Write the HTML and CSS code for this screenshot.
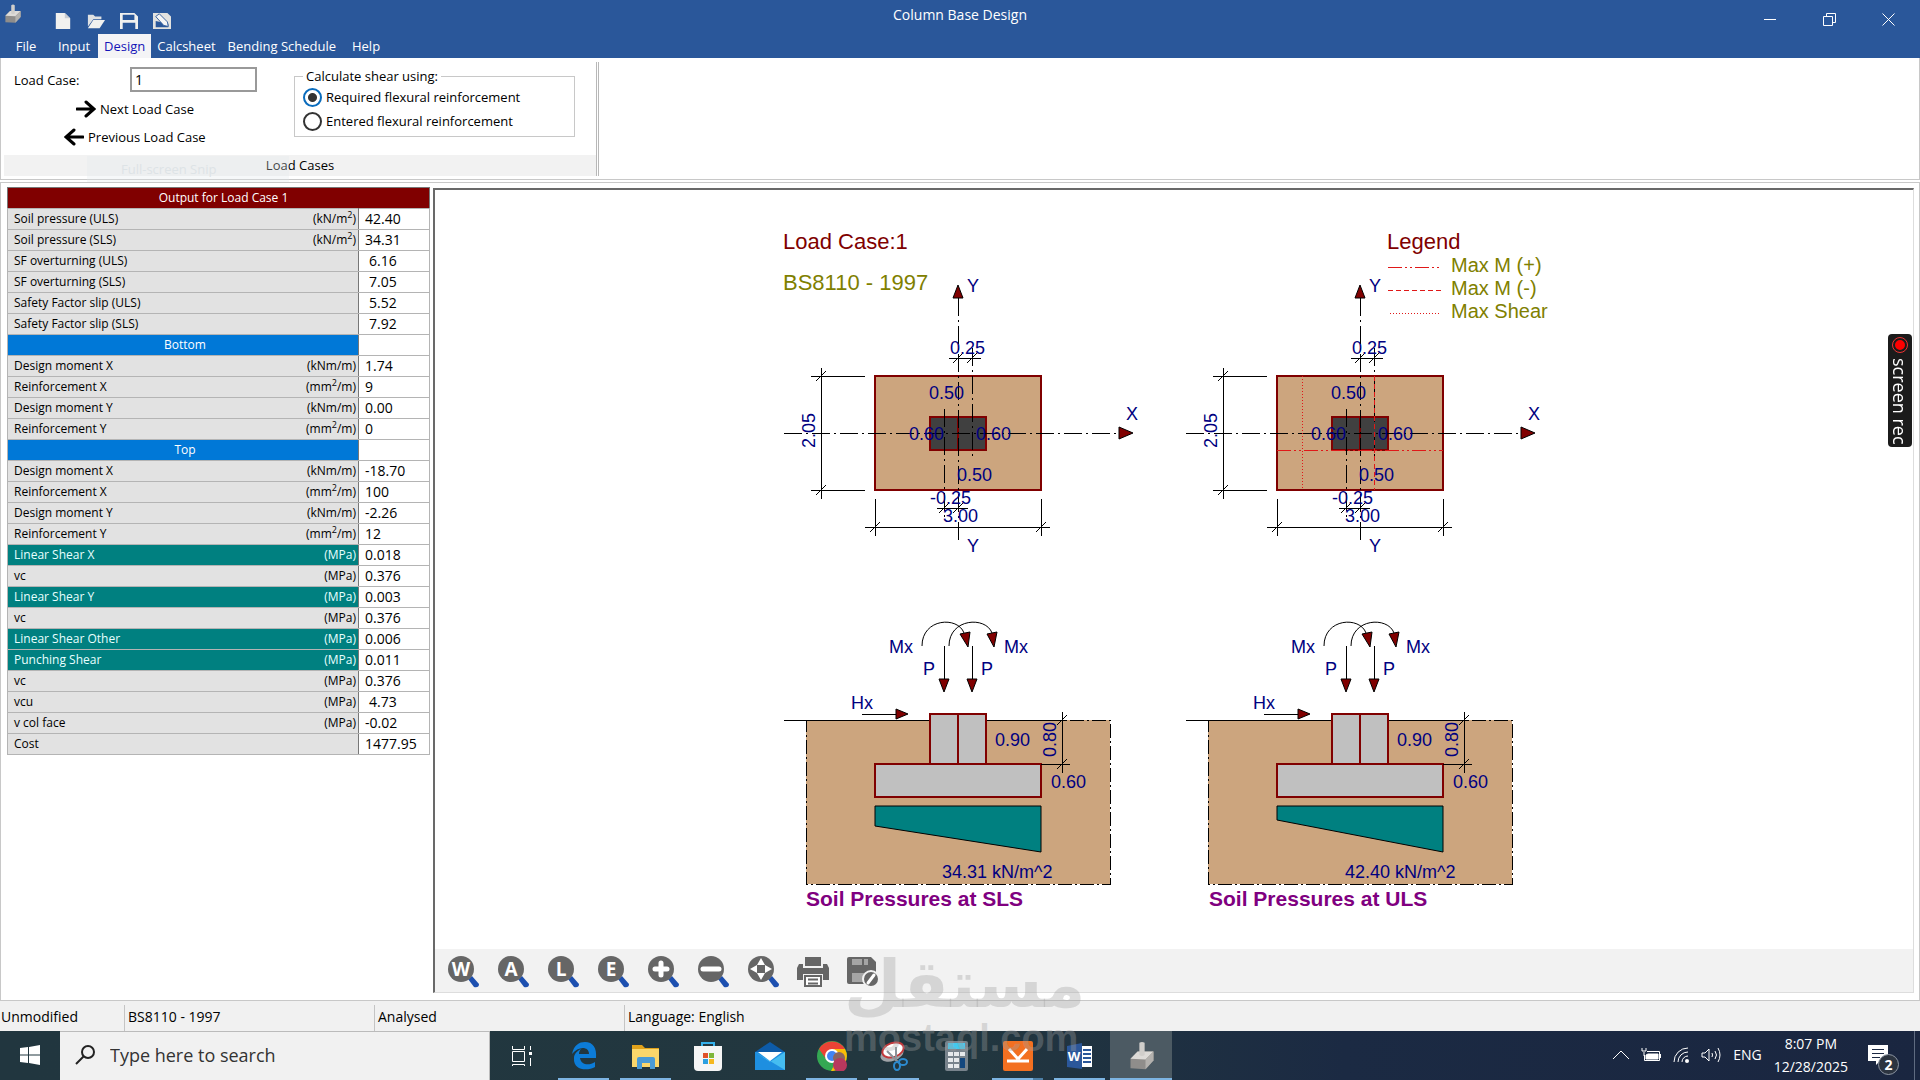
FILE: index.html
```html
<!DOCTYPE html>
<html lang="en">
<head>
    <meta charset="UTF-8">
    <meta name="viewport" content="width=device-width, initial-scale=1.0">
    <title>Column Base Design</title>
    <link rel="stylesheet" href="styles.css">
</head>
<body>
<svg class="sprite" aria-hidden="true">
    <defs>
        <symbol id="app-icon" viewBox="0 0 28 34">
            <path d="M1 20 L9 12 L27 12 L27 22 L18 32 L1 31 Z" fill="#8f8d8b"/>
            <path d="M1 20 L9 12 L27 12 L18 21 Z" fill="#dddbd8"/>
            <path d="M18 21 L27 12 L27 22 L18 32 Z" fill="#b3b1ae"/>
            <path d="M11 2 Q14 0 17 2 L17 16 Q14 18 11 16 Z" fill="#d0cecb"/>
        </symbol>
        <symbol id="lens" viewBox="0 0 32 32">
            <path d="M21 23 L25 20 L32 28 Q32 32 27 31 Z" fill="#1c4fb0"/>
            <circle cx="14" cy="13" r="13" fill="#666"/>
        </symbol>

        <!-- Plan view, origin at the centre of the base -->
        <g id="plan">
            <rect class="base" x="-83" y="-57" width="166" height="114"/>
            <rect class="column" x="-28" y="-16" width="56" height="33"/>
            <path class="edge" d="M0 -16 V17"/>
            <path class="axis" d="M-174 0 H161 M0 -135 V110 M14 -85 V25 M-14 -24 V84"/>
            <path class="arrow" d="M161 -6 L175 0 L161 6 Z M-5 -135 L0 -148 L5 -135 Z"/>
            <path class="dim" d="M-137 -65 V66 M-147 -57 H-93 M-147 57 H-93 M-93 94 H92 M-83 66 V103 M83 66 V103 M-9 -75 H23 M-21 75 H10"/>
            <path class="tick" d="M-142 -52 l10 -10 M-142 62 l10 -10 M-88 99 l10 -10 M78 99 l10 -10 M-5 -70 l10 -10 M9 -70 l10 -10 M-19 80 l10 -10 M-5 80 l10 -10"/>
            <text x="9" y="-141">Y</text>
            <text x="168" y="-13">X</text>
            <text x="9" y="119">Y</text>
            <text x="-8" y="-79">0.25</text>
            <text x="-29" y="-34">0.50</text>
            <text x="-49" y="7">0.60</text>
            <text x="18" y="7">0.60</text>
            <text x="-1" y="48">0.50</text>
            <text x="-28" y="71">-0.25</text>
            <text x="-15" y="89">3.00</text>
            <text transform="translate(-143 15) rotate(-90)">2.05</text>
        </g>

        <!-- Section, origin at ground level on the centre line -->
        <g id="section">
            <rect class="soil" x="-152" y="0" width="304" height="164"/>
            <path class="dim" d="M-174 0 H108"/>
            <rect class="concrete" x="-28" y="-6" width="56" height="50"/>
            <rect class="concrete" x="-83" y="44" width="166" height="33"/>
            <path class="edge" d="M0 -6 V44"/>
            <path class="dim" d="M104 -8 V53 M83 44 H112 M-96 -6 H-62 M-14 -74 V-41 M14 -74 V-41"/>
            <path class="tick" d="M99 5 l10 -10 M99 49 l10 -10"/>
            <path class="tick" d="M-36 -74 C-36 -102 0 -104 6 -87 M-9 -74 C-9 -102 28 -104 34 -87"/>
            <path class="arrow" d="M-62 -11 L-50 -6 L-62 -1 Z M-19 -41 H-9 L-14 -28 Z M9 -41 H19 L14 -28 Z M2 -86 L12 -88 L10 -73 Z M29 -86 L39 -88 L36 -73 Z"/>
            <text x="-107" y="-11">Hx</text>
            <text x="-69" y="-67">Mx</text>
            <text x="46" y="-67">Mx</text>
            <text x="-35" y="-45">P</text>
            <text x="23" y="-45">P</text>
            <text x="37" y="26">0.90</text>
            <text x="93" y="68">0.60</text>
            <text transform="translate(98 37) rotate(-90)">0.80</text>
        </g>
    </defs>
</svg>

<header class="titlebar">
    <div class="caption">
        <div class="quick-access">
            <svg class="logo"><use href="#app-icon"/></svg>
            <button aria-label="New"><svg viewBox="0 0 20 20"><path d="M2 1 H12 L18 7 V19 H2 Z" fill="#f1f1ef"/><path d="M12 1 V7 H18" fill="#c9cdd3"/></svg></button>
            <button aria-label="Open"><svg viewBox="0 0 20 20"><path d="M1 3 H7 L9 5 H16 V8 H7 L1 16 Z" fill="#dfe1e3"/><path d="M7 9 H20 L14 18 H1 Z" fill="#f1f1ef"/></svg></button>
            <button aria-label="Save"><svg viewBox="0 0 20 20"><path d="M0 1 H16 L20 5 V19 H0 Z M3 3 V9 H16 V3 Z M3 12 V19 H17 V12 Z" fill="#f1f1ef" fill-rule="evenodd"/></svg></button>
            <button aria-label="Save as"><svg viewBox="0 0 20 20"><path d="M0 1 H16 L20 5 V19 H0 Z M3 10 V17 H17 V13 Z" fill="#e2e2e0" fill-rule="evenodd"/><path d="M3 5 L7 2 L16 11 L17 16 L12 15 Z" fill="#f5f5f5" stroke="#2a579a"/></svg></button>
        </div>
        <h1>Column Base Design</h1>
        <div class="window-buttons">
            <button aria-label="Minimise"><svg viewBox="0 0 13 13"><path d="M0 6.5 H12"/></svg></button>
            <button aria-label="Restore"><svg viewBox="0 0 13 13"><path d="M.5 3.5 H9.5 V12.5 H.5 Z M3.5 3.5 V.5 H12.5 V9.5 H9.5"/></svg></button>
            <button aria-label="Close"><svg viewBox="0 0 13 13"><path d="M.5 .5 L12.5 12.5 M12.5 .5 L.5 12.5"/></svg></button>
        </div>
    </div>
    <nav class="tabs">
        <button>File</button>
        <button>Input</button>
        <button class="active">Design</button>
        <button>Calcsheet</button>
        <button>Bending Schedule</button>
        <button>Help</button>
    </nav>
</header>

<section class="ribbon">
    <div class="ribbon-group">
        <div class="ribbon-body">
            <div class="load-case">
                <div class="field">
                    <label for="load-case">Load Case:</label>
                    <input type="text" id="load-case" value="1">
                </div>
                <button class="next"><svg viewBox="0 0 20 18"><path d="M1 9 H17 M10 2 L18 9 L10 16"/></svg>Next Load Case</button>
                <button class="previous"><svg viewBox="0 0 20 18"><path d="M19 9 H3 M10 2 L2 9 L10 16"/></svg>Previous Load Case</button>
            </div>
            <fieldset>
                <legend>Calculate shear using:</legend>
                <label><input type="radio" name="shear" checked>Required flexural reinforcement</label>
                <label><input type="radio" name="shear">Entered flexural reinforcement</label>
            </fieldset>
        </div>
        <div class="ribbon-caption">Load Cases</div>
        <div class="snip-hint">Full-screen Snip</div>
    </div>
</section>

<main>
    <section class="output">
        <table>
            <colgroup>
                <col>
                <col class="values">
            </colgroup>
            <thead>
                <tr><th colspan="2">Output for Load Case 1</th></tr>
            </thead>
            <tbody>
                <tr><td><div>Soil pressure (ULS)<span>(kN/m<sup>2</sup>)</span></div></td><td>42.40</td></tr>
                <tr><td><div>Soil pressure (SLS)<span>(kN/m<sup>2</sup>)</span></div></td><td>34.31</td></tr>
                <tr><td><div>SF overturning (ULS)</div></td><td class="pad">6.16</td></tr>
                <tr><td><div>SF overturning (SLS)</div></td><td class="pad">7.05</td></tr>
                <tr><td><div>Safety Factor slip (ULS)</div></td><td class="pad">5.52</td></tr>
                <tr><td><div>Safety Factor slip (SLS)</div></td><td class="pad">7.92</td></tr>
                <tr class="heading"><td>Bottom</td><td></td></tr>
                <tr><td><div>Design moment X<span>(kNm/m)</span></div></td><td>1.74</td></tr>
                <tr><td><div>Reinforcement X<span>(mm<sup>2</sup>/m)</span></div></td><td>9</td></tr>
                <tr><td><div>Design moment Y<span>(kNm/m)</span></div></td><td>0.00</td></tr>
                <tr><td><div>Reinforcement Y<span>(mm<sup>2</sup>/m)</span></div></td><td>0</td></tr>
                <tr class="heading"><td>Top</td><td></td></tr>
                <tr><td><div>Design moment X<span>(kNm/m)</span></div></td><td>-18.70</td></tr>
                <tr><td><div>Reinforcement X<span>(mm<sup>2</sup>/m)</span></div></td><td>100</td></tr>
                <tr><td><div>Design moment Y<span>(kNm/m)</span></div></td><td>-2.26</td></tr>
                <tr><td><div>Reinforcement Y<span>(mm<sup>2</sup>/m)</span></div></td><td>12</td></tr>
                <tr class="shear"><td><div>Linear Shear X<span>(MPa)</span></div></td><td>0.018</td></tr>
                <tr><td><div>vc<span>(MPa)</span></div></td><td>0.376</td></tr>
                <tr class="shear"><td><div>Linear Shear Y<span>(MPa)</span></div></td><td>0.003</td></tr>
                <tr><td><div>vc<span>(MPa)</span></div></td><td>0.376</td></tr>
                <tr class="shear"><td><div>Linear Shear Other<span>(MPa)</span></div></td><td>0.006</td></tr>
                <tr class="shear"><td><div>Punching Shear<span>(MPa)</span></div></td><td>0.011</td></tr>
                <tr><td><div>vc<span>(MPa)</span></div></td><td>0.376</td></tr>
                <tr><td><div>vcu<span>(MPa)</span></div></td><td class="pad">4.73</td></tr>
                <tr><td><div>v col face<span>(MPa)</span></div></td><td>-0.02</td></tr>
                <tr><td><div>Cost</div></td><td>1477.95</td></tr>
            </tbody>
        </table>
    </section>

    <section class="viewer">
        <svg class="drawing" viewBox="1 0 1478 759">
            <text class="title" x="349" y="59">Load Case:1</text>
            <text class="code" x="349" y="100">BS8110 - 1997</text>

            <text class="title" x="953" y="59">Legend</text>
            <path class="moment-pos" d="M954 77 H1008"/>
            <path class="moment-neg" d="M954 100 H1008"/>
            <path class="max-shear" d="M956 123 H1006"/>
            <text class="legend" x="1017" y="82">Max M (+)</text>
            <text class="legend" x="1017" y="105">Max M (-)</text>
            <text class="legend" x="1017" y="128">Max Shear</text>

            <use href="#plan" x="524" y="243"/>
            <use href="#plan" x="926" y="243"/>
            <g transform="translate(926 243)">
                <path class="moment-pos" d="M-83 17 H83"/>
                <path class="moment-neg" d="M14 -57 V57"/>
                <path class="max-shear" d="M-58 -57 V57"/>
            </g>

            <use href="#section" x="524" y="530"/>
            <g transform="translate(524 530)">
                <path class="pressure" d="M-83 86 H83 V132 L-83 106 Z"/>
                <text x="-16" y="158">34.31 kN/m^2</text>
                <text class="subtitle" x="-152" y="186">Soil Pressures at SLS</text>
            </g>
            <use href="#section" x="926" y="530"/>
            <g transform="translate(926 530)">
                <path class="pressure" d="M-83 86 H83 V132 L-83 100 Z"/>
                <text x="-15" y="158">42.40 kN/m^2</text>
                <text class="subtitle" x="-151" y="186">Soil Pressures at ULS</text>
            </g>
        </svg>

        <div class="toolbar">
            <button aria-label="Zoom window"><svg viewBox="0 0 32 32"><use href="#lens"/><text x="14" y="20">W</text></svg></button>
            <button aria-label="Zoom all"><svg viewBox="0 0 32 32"><use href="#lens"/><text x="14" y="20">A</text></svg></button>
            <button aria-label="Zoom last"><svg viewBox="0 0 32 32"><use href="#lens"/><text x="14" y="20">L</text></svg></button>
            <button aria-label="Zoom extents"><svg viewBox="0 0 32 32"><use href="#lens"/><text x="14" y="20">E</text></svg></button>
            <button aria-label="Zoom in"><svg viewBox="0 0 32 32"><use href="#lens"/><path d="M14 7 V19 M8 13 H20" stroke="#fff" stroke-width="5" stroke-linecap="round"/></svg></button>
            <button aria-label="Zoom out"><svg viewBox="0 0 32 32"><use href="#lens"/><path d="M6 13 H22" stroke="#fff" stroke-width="5" stroke-linecap="round"/></svg></button>
            <button aria-label="Pan"><svg viewBox="0 0 32 32"><use href="#lens"/><path d="M14 2 L18 9 H10 Z M14 24 L18 17 H10 Z M3 13 L10 9 V17 Z M25 13 L18 9 V17 Z" fill="#fff"/></svg></button>
            <button aria-label="Print"><svg viewBox="0 0 32 32"><path d="M8 1 H24 V10 H8 Z" fill="#666"/><path d="M2 8 H6 V12 H26 V8 H30 L32 12 V24 H26 V18 H6 V24 H0 V12 Z" fill="#666"/><path d="M8 20 H24 V30 H8 Z M11 23.500 H21 M11 27.500 H21" fill="#fff" stroke="#666" stroke-width="2"/></svg></button>
            <button aria-label="Save drawing"><svg viewBox="0 0 32 32"><path d="M2 1 H24 L29 6 V28 H2 Q0 28 0 26 V3 Q0 1 2 1 Z" fill="#666"/><path d="M5 3 H15 V9 H5 Z M17 3 H21 V9 H17 Z M5 17 H17 V26 H5 Z" fill="#a5a5a5"/><circle cx="24" cy="23" r="8" fill="#666" stroke="#f2f2f2" stroke-width="2"/><path d="M21 27 L27 19" stroke="#fff" stroke-width="3" stroke-linecap="round"/></svg></button>
        </div>
    </section>
</main>

<footer class="statusbar">
    <span>Unmodified</span>
    <span>BS8110 - 1997</span>
    <span>Analysed</span>
    <span>Language: English</span>
</footer>

<div class="taskbar">
    <button class="start" aria-label="Start"><svg viewBox="0 0 20 20"><path d="M0 3 L8 2 V9.500 H0 Z M9 2 L20 0 V9.500 H9 Z M0 10.500 H8 V18 L0 17 Z M9 10.500 H20 V20 L9 18 Z" fill="#fff"/></svg></button>
    <div class="search">
        <svg viewBox="0 0 20 20"><circle cx="13" cy="7" r="6"/><path d="M8.500 11.500 L1 19"/></svg>
        <input type="text" placeholder="Type here to search" aria-label="Type here to search">
    </div>
    <div class="apps">
        <button aria-label="Task view"><svg viewBox="0 0 30 30"><path d="M5.500 10.500 H17.500 V20.500 H5.500 Z M5.500 5 V8.500 H17.500 V5 M5.500 25 V23.500 H17.500 V25 M23.500 5 V9 M23.500 17 V25" fill="none" stroke="#fff"/><path d="M22 11 h3 v3 h-3 Z" fill="#fff"/></svg></button>
        <button class="running" aria-label="Edge"><svg viewBox="0 0 30 30"><path d="M3 13 C5 4 10 1 16 1 C24 1 28 7 27 17 H11 C12 24 20 25 26 21 V26 C19 30 4 30 5 17 C5 13 8 10 12 8 C10 10 10 12 10 13 H20 C20 5 9 5 3 13 Z" fill="#0c7cd8"/></svg></button>
        <button class="running" aria-label="File Explorer"><svg viewBox="0 0 30 30"><path d="M1 4 H11 L14 7 H28 V26 H1 Z" fill="#e0a21b"/><path d="M1 8 H28 V26 H1 Z" fill="#fbd76b"/><path d="M6 28 V18 Q6 16 8 16 H22 Q24 16 24 18 V28 H19 V22 H11 V28 Z" fill="#4a9bd6"/></svg></button>
        <button aria-label="Store"><svg viewBox="0 0 30 30"><path d="M9 7 V2 H21 V7" fill="none" stroke="#35b1ec" stroke-width="2"/><path d="M1 5 H29 V26 Q29 30 25 30 H5 Q1 30 1 26 Z" fill="#f5f5f5"/><path d="M10 12 h5 v5 h-5 Z" fill="#e05129"/><path d="M16 12 h5 v5 h-5 Z" fill="#7eb63b"/><path d="M10 18 h5 v5 h-5 Z" fill="#2c9fe0"/><path d="M16 18 h5 v5 h-5 Z" fill="#f5b81f"/></svg></button>
        <button aria-label="Mail"><svg viewBox="0 0 30 30"><path d="M0 11 L15 1 L30 11 Z" fill="#0d5ba8"/><path d="M0 11 H30 V29 H0 Z" fill="#1e8fe0"/><path d="M0 11 L15 21 L30 11 V29 Z" fill="#45bdf1"/><path d="M3 11 H27 L15 20 Z" fill="#fff"/></svg></button>
        <button class="running" aria-label="Chrome"><svg viewBox="0 0 30 30"><circle cx="15" cy="15" r="15" fill="#34a853"/><path d="M2 8 A15 15 0 0 1 28 8 H15 L9 18 Z" fill="#ea4335"/><path d="M28 8 A15 15 0 0 1 14 30 L21 17 L15 8 Z" fill="#fbbc05"/><circle cx="15" cy="15" r="7" fill="#fff"/><circle cx="15" cy="15" r="5" fill="#4285f4"/><circle cx="22" cy="17" r="6" fill="#8b6560"/><circle cx="23" cy="24" r="7" fill="#b8385d"/></svg></button>
        <button class="running" aria-label="Snipping Tool"><svg viewBox="0 0 30 30"><ellipse cx="13" cy="13" rx="12" ry="7" transform="rotate(-20 13 13)" fill="#a0a4a8"/><ellipse cx="14" cy="9" rx="11" ry="7" transform="rotate(-20 14 9)" fill="#fff" stroke="#c2393b" stroke-width="2"/><path d="M8 10 L19 21 M17 6 L17 20" stroke="#8b9299" stroke-width="2"/><ellipse cx="24" cy="21" rx="4" ry="3" fill="none" stroke="#2c8bd0" stroke-width="2"/><ellipse cx="18" cy="25" rx="3" ry="4" fill="none" stroke="#2c8bd0" stroke-width="2"/></svg></button>
        <button aria-label="Calculator"><svg viewBox="0 0 30 30"><rect x="4" y="0" width="23" height="30" rx="2" fill="#78838c"/><path d="M7 2 H24 V8 H7 Z" fill="#43c9ee"/><path d="M7 11 h5 v4 h-5 Z M13 11 h5 v4 h-5 Z M19 11 h5 v4 h-5 Z M7 17 h5 v4 h-5 Z M13 17 h5 v4 h-5 Z M7 23 h5 v4 h-5 Z M13 23 h5 v4 h-5 Z" fill="#e6e9eb"/><path d="M19 17 h5 v10 h-5 Z" fill="#13477e"/></svg></button>
        <button class="running stacked" aria-label="Kinemaster"><svg viewBox="0 0 30 30"><rect width="30" height="30" rx="2" fill="#f37021"/><path d="M4 20 H26 M15 18 L6 8 M15 18 L24 8" stroke="#fff" stroke-width="3" fill="none"/></svg></button>
        <button class="running" aria-label="Word"><svg viewBox="0 0 30 30"><path d="M14 5 H27 V26 H14 Z" fill="#fff"/><path d="M18 9 H26 M18 13 H26 M18 17 H26 M18 21 H26" stroke="#2b579a" stroke-width="2"/><path d="M2 5 L17 2 V28 L2 26 Z" fill="#2b579a"/><text class="word" x="9" y="20">W</text></svg></button>
        <button class="running current" aria-label="Column Base Design"><svg><use href="#app-icon"/></svg></button>
    </div>
    <div class="tray">
        <button aria-label="Show hidden icons"><svg viewBox="0 0 16 16"><path d="M0 12 L8 4 L16 12"/></svg></button>
        <button aria-label="Battery"><svg class="wide" viewBox="0 0 20 16"><path d="M3.500 8 V13.500 H18.500 V4.500 H6 M19.500 7 V11 M1 1 V4 H5 V1 M3 5 V9"/><path d="M7 7 H17 V12 H5 V8 Z" fill="#fff"/></svg></button>
        <button aria-label="Network"><svg viewBox="0 0 16 16"><path d="M1 15 A14 14 0 0 1 15 1 M5 15 A10 10 0 0 1 15 5 M9 15 A6 6 0 0 1 15 9"/><circle cx="14" cy="14" r="2" fill="#fff" stroke="none"/></svg></button>
        <button aria-label="Volume"><svg class="wide" viewBox="0 0 20 16"><path d="M1 6 H4 L8 2 V14 L4 10 H1 Z M11 6 Q12 8 11 10 M14 4 Q17 8 14 12 M17 1 Q21 8 17 15"/></svg></button>
        <span>ENG</span>
        <time datetime="2025-12-28T20:07">8:07 PM<br>12/28/2025</time>
        <button class="notifications" aria-label="Notifications"><svg viewBox="0 0 20 20"><path d="M0 0 H20 V16 H12 L8 20 V16 H0 Z" fill="#fff" stroke="none"/><path d="M4 4.500 H16 M4 8.500 H16 M4 12.500 H12" stroke="#1b2842"/></svg><b>2</b></button>
    </div>
</div>

<button class="screenrec"><i></i>screen rec</button>

<div class="watermark">
    <span lang="ar">مستقل</span>
    <span>mostaql.com</span>
</div>
</body>
</html>
```

FILE: styles.css
```css
* {
    box-sizing: border-box;
}

body {
    margin: 0;
    min-height: 100vh;
    display: flex;
    flex-direction: column;
    position: relative;
    background: #fff;
    color: #000;
    font-family: "Open Sans", "Noto Sans", sans-serif;
    font-size: 13px;
    line-height: 20px;
}

button {
    padding: 0;
    border: none;
    background: none;
    color: inherit;
    font: inherit;
}

svg {
    display: block;
    flex: none;
}

.sprite {
    position: absolute;
    width: 0;
    height: 0;
}

/* Title bar */
.titlebar {
    background: #2a579a;
    color: #fff;
}

.caption {
    display: grid;
    grid-template-columns: 1fr auto 1fr;
    height: 34px;
}

.caption h1 {
    margin: 0;
    padding-top: 5px;
    font-size: 14px;
    font-weight: normal;
}

.quick-access {
    display: flex;
    gap: 13px;
    padding: 4px 0 0 2px;
}

.quick-access .logo {
    width: 22px;
    height: 20px;
    margin-right: 16px;
}

.quick-access button svg {
    width: 20px;
    height: 18px;
    margin-top: 4px;
}

.window-buttons {
    display: flex;
    justify-content: flex-end;
    padding-right: 2px;
}

.window-buttons button {
    width: 59px;
    padding: 4px 23px 0;
}

.window-buttons svg {
    width: 13px;
    height: 13px;
    fill: none;
    stroke: #fff;
}

.tabs {
    display: flex;
    padding-left: 2px;
}

.tabs button {
    min-width: 48px;
    height: 24px;
    padding: 0 6px;
}

.tabs .active {
    background: #f4f4f6;
    color: #1414b8;
}

/* Ribbon */
.ribbon {
    height: 122px;
    padding: 4px 3px;
    border: 1px solid #c8c8c8;
    border-top: none;
}

.ribbon-group {
    position: relative;
    width: 595px;
    height: 114px;
    display: flex;
    flex-direction: column;
    border-right: 3px double #b8b8b8;
}

.ribbon-body {
    flex: 1;
    display: flex;
    gap: 37px;
    padding: 5px 20px 0 10px;
}

.load-case {
    width: 243px;
}

.field {
    display: flex;
    justify-content: space-between;
    align-items: center;
    margin-bottom: 7px;
}

.field input {
    width: 127px;
    height: 25px;
    padding: 0 3px;
    border: 2px solid #999;
    font: inherit;
    font-size: 14px;
}

.load-case button {
    display: flex;
    align-items: center;
    gap: 4px;
    height: 20px;
    margin-bottom: 8px;
}

.load-case .next {
    margin-left: 62px;
}

.load-case .previous {
    margin-left: 50px;
}

.load-case svg {
    width: 20px;
    height: 18px;
    fill: none;
    stroke: #000;
    stroke-width: 3;
    stroke-linecap: round;
}

fieldset {
    width: 281px;
    height: 70px;
    margin: 0;
    padding: 0 8px;
    border: 1px solid #c8c8c8;
}

legend {
    padding: 0 3px;
    line-height: 18px;
}

fieldset label {
    display: flex;
    align-items: center;
    gap: 4px;
    height: 24px;
}

fieldset input {
    appearance: none;
    width: 19px;
    height: 19px;
    margin: 0;
    border: 2px solid #333;
    border-radius: 50%;
}

fieldset input:checked {
    border-color: #0a6cbd;
    background: radial-gradient(#333 4px, #fff 5px);
}

.ribbon-caption {
    height: 22px;
    background: #f2f2f2;
    text-align: center;
}

.snip-hint {
    position: absolute;
    left: 83px;
    bottom: -6px;
    width: 202px;
    height: 26px;
    padding: 3px 34px;
    background: rgba(225, 232, 236, 0.3);
    color: #dde3e6;
    white-space: nowrap;
}

/* Work area */
main {
    flex: 1;
    display: flex;
    margin-top: 2px;
    padding: 4px 5px 7px 6px;
    border: 1px solid #c8c8c8;
}

.output {
    width: 426px;
    flex: none;
}

table {
    width: 423px;
    border-collapse: collapse;
    border: 1px solid #777;
    table-layout: fixed;
    font-size: 12px;
}

.values {
    width: 71px;
}

th {
    height: 21px;
    padding: 0 0 0 10px;
    background: #800000;
    border: 1px dotted #fff;
    color: #fff;
    font-weight: normal;
    line-height: 18px;
}

td {
    height: 21px;
    padding: 0 0 0 6px;
    border: 1px solid #b4b4b4;
    font-size: 14px;
    line-height: 20px;
}

td:first-child {
    padding: 0 2px 0 6px;
    background: #e2e2e2;
    border-right-color: #777;
    font-size: 12px;
}

td div {
    display: flex;
    justify-content: space-between;
    height: 20px;
}

td.pad {
    padding-left: 10px;
}

sup {
    font-size: 9px;
    line-height: 0;
}

.heading td:first-child {
    background: #0078d7;
    color: #fff;
    text-align: center;
}

.shear td:first-child {
    background: #008080;
    color: #e8ffff;
}

.viewer {
    flex: 1;
    display: flex;
    flex-direction: column;
    margin-top: 1px;
    border: 1px solid #ddd;
    border-top: 2px solid #696969;
    border-left: 2px solid #696969;
}

/* Drawing */
.drawing {
    flex: 1;
    width: 100%;
    min-height: 0;
    font-family: "Liberation Sans", Arial, sans-serif;
    font-size: 18px;
}

.drawing text,
#plan text,
#section text {
    fill: #000080;
}

.drawing .title {
    fill: #800000;
    font-size: 22px;
}

.drawing .code {
    fill: #808000;
    font-size: 22px;
}

.drawing .legend {
    fill: #808000;
    font-size: 20px;
}

.drawing .subtitle {
    fill: #800080;
    font-size: 21px;
    font-weight: bold;
}

.base,
.column,
.concrete,
.edge {
    stroke: #800000;
    stroke-width: 2;
    shape-rendering: crispEdges;
}

.base {
    fill: #cca57e;
}

.column {
    fill: #404040;
}

.concrete {
    fill: #c0c0c0;
}

.soil {
    fill: #cca57e;
    stroke: #000;
    stroke-dasharray: 14 3 2 3;
    shape-rendering: crispEdges;
}

.axis,
.dim {
    fill: none;
    stroke: #000;
    shape-rendering: crispEdges;
}

.axis {
    stroke-dasharray: 18 4 2 4;
}

.tick {
    fill: none;
    stroke: #000;
}

.arrow {
    fill: #800000;
    stroke: #000;
    stroke-width: 1;
}

.pressure {
    fill: #008080;
    stroke: #000;
}

.moment-pos,
.moment-neg,
.max-shear {
    fill: none;
    stroke: #e01818;
    shape-rendering: crispEdges;
}

.moment-pos {
    stroke-dasharray: 14 3 2 3 2 3;
}

.moment-neg {
    stroke-dasharray: 5 3;
}

.max-shear {
    stroke-dasharray: 1 2;
}

/* Drawing toolbar */
.toolbar {
    display: flex;
    gap: 18px;
    height: 43px;
    padding: 7px 12px 5px;
    background: #f2f2f2;
}

.toolbar svg {
    width: 32px;
    height: 32px;
}

.toolbar text {
    fill: #fff;
    font-size: 19px;
    font-weight: bold;
    text-anchor: middle;
}

/* Status bar */
.statusbar {
    display: flex;
    height: 30px;
    padding-top: 4px;
    background: #f1f1f1;
    font-size: 14px;
    line-height: 24px;
}

.statusbar span {
    width: 250px;
    padding-left: 3px;
    border-left: 1px solid #c4c4c4;
}

.statusbar span:first-child {
    width: 124px;
    padding-left: 1px;
    border-left: none;
}

/* Taskbar */
.taskbar {
    display: flex;
    height: 50px;
    background: linear-gradient(90deg, #21363f 0%, #22373f 50%, #1b2a43 70%, #1a2640 100%);
    color: #fff;
}

.start {
    width: 60px;
    padding: 0 20px 2px;
}

.start svg {
    width: 20px;
    height: 20px;
}

.search {
    display: flex;
    align-items: center;
    gap: 13px;
    width: 430px;
    padding: 0 0 2px 15px;
    background: #f1f1f1;
    border: 1px solid #bbb;
    border-left: none;
}

.search svg {
    width: 20px;
    height: 20px;
    fill: none;
    stroke: #222;
    stroke-width: 2;
}

.search input {
    flex: 1;
    border: none;
    background: none;
    font: inherit;
    font-size: 18px;
}

.search input::placeholder {
    color: #333;
}

.apps {
    display: flex;
}

.apps button {
    position: relative;
    width: 62px;
    height: 50px;
    padding: 0 15px 0 17px;
}

.apps svg {
    width: 30px;
    height: 30px;
}

.apps .running::after {
    content: "";
    position: absolute;
    left: 6px;
    right: 5px;
    bottom: 0;
    height: 3px;
    background: #7db4e2;
}

.apps .stacked::after {
    background: linear-gradient(90deg, #7db4e2 80%, #4d7fa6 80%);
}

.apps .current {
    background: #4c5a63;
}

.apps .current::after {
    left: 0;
    right: 0;
}

.apps .word {
    fill: #fff;
    font-size: 13px;
    font-weight: bold;
    text-anchor: middle;
}

.tray {
    display: flex;
    align-items: center;
    gap: 12px;
    margin-left: auto;
    margin-right: 5px;
    padding: 0 16px 2px 0;
    border-right: 1px solid #5f6b80;
    font-size: 14px;
}

.tray svg {
    width: 16px;
    height: 16px;
    fill: none;
    stroke: #fff;
}

.tray .wide {
    width: 20px;
}

.tray time {
    line-height: 23px;
    text-align: center;
}

.tray .notifications {
    position: relative;
    width: 30px;
    margin-left: 8px;
}

.tray .notifications svg {
    width: 20px;
    height: 20px;
}

.notifications b {
    position: absolute;
    left: 10px;
    top: 9px;
    width: 21px;
    height: 21px;
    border: 1px solid #8d96a3;
    border-radius: 50%;
    background: #2c3440;
    line-height: 19px;
}

/* Overlays */
.screenrec {
    position: fixed;
    right: 8px;
    top: 334px;
    width: 24px;
    height: 113px;
    display: flex;
    align-items: center;
    gap: 6px;
    padding: 4px 0;
    border-radius: 4px;
    background: #1b1b1b;
    color: #fff;
    font-size: 18px;
    line-height: 24px;
    white-space: nowrap;
    writing-mode: vertical-rl;
}

.screenrec i {
    width: 14px;
    height: 14px;
    flex: none;
    border: 2px solid #1b1b1b;
    border-radius: 50%;
    outline: 1px solid #e33;
    background: #f00;
}

.watermark {
    position: absolute;
    left: 844px;
    bottom: 0;
    width: 232px;
    height: 130px;
    color: rgba(160, 160, 160, 0.35);
    font-family: "Liberation Sans", Arial, sans-serif;
    font-size: 38px;
    font-weight: bold;
    line-height: 38px;
    text-align: center;
    pointer-events: none;
}

.watermark span {
    display: block;
}

.watermark span:first-child {
    font-family: "DejaVu Sans", sans-serif;
    font-size: 66px;
    line-height: 68px;
}
```
